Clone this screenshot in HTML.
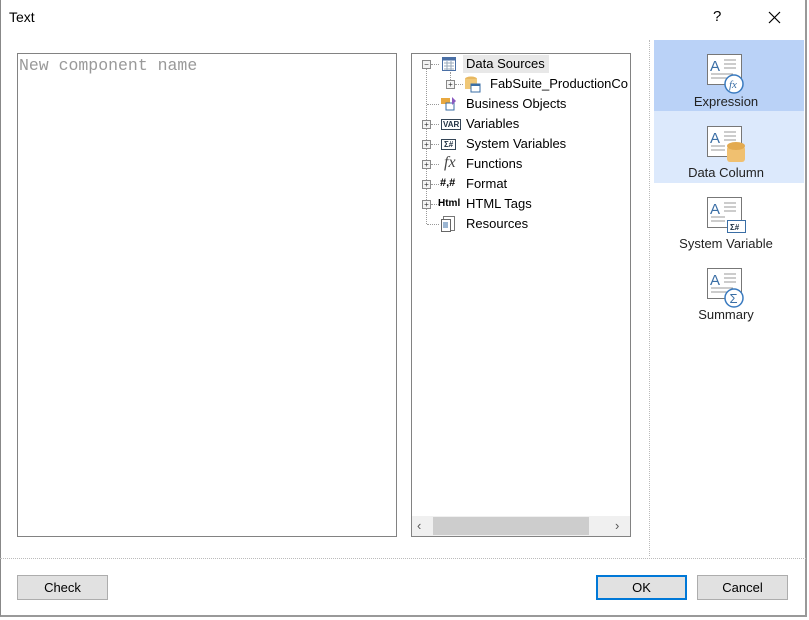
<!DOCTYPE html>
<html><head><style>
body{margin:0;width:809px;height:620px;background:#fff;font-family:"Liberation Sans",sans-serif;font-size:13px;position:relative;overflow:hidden;color:#000}
.a{position:absolute}
.win{left:0;top:0;width:807px;height:617px;border:1px solid #888;border-right:2px solid #999;border-bottom:2px solid #999;border-top:none;box-sizing:border-box}
.tree div{position:absolute;left:54px;height:18px;line-height:18px;font-size:13px;white-space:nowrap}
.pl{position:absolute;width:7px;height:7px;border:1px solid #888;background:#f4f4f4;font-size:8px;line-height:7px;text-align:center;color:#333}
.btn{position:absolute;top:575px;height:25px;background:#e1e1e1;border:1px solid #adadad;box-sizing:border-box;text-align:center;line-height:23px;font-size:13px}
.lbl{position:absolute;width:150px;text-align:center;font-size:13px;color:#222}
.h{position:absolute;width:8px;border-top:1px dotted #999}
</style></head><body>
<div class="a win"></div>
<div class="a" style="left:9px;top:9px;font-size:14px">Text</div>
<div class="a" style="left:713px;top:8px;font-size:15px">?</div>
<svg class="a" style="left:768px;top:11px" width="13" height="13"><path d="M1 1L12 12M12 1L1 12" stroke="#000" stroke-width="1.2"/></svg>
<div class="a" style="left:17px;top:53px;width:380px;height:484px;border:1px solid #828282;box-sizing:border-box"></div>
<div class="a" style="left:19px;top:56px;font-family:'Liberation Mono',monospace;font-size:16.5px;color:#999">New component name</div>
<div class="a" style="left:411px;top:53px;width:220px;height:484px;border:1px solid #828282;box-sizing:border-box"></div>
<div class="a" style="left:412px;top:516px;width:218px;height:20px;background:#f0f0f0"></div>
<div class="a" style="left:433px;top:517px;width:156px;height:18px;background:#cdcdcd"></div>
<div class="a" style="left:417px;top:516px;line-height:20px;color:#555;font-size:13px">‹</div>
<div class="a" style="left:615px;top:516px;line-height:20px;color:#555;font-size:13px">›</div>
<div class="a" style="left:426px;top:68px;height:156px;border-left:1px dotted #999"></div>
<div class="a" style="left:450px;top:72px;height:8px;border-left:1px dotted #999"></div>
<div class="h" style="left:431px;top:64px"></div>
<div class="h" style="left:455px;top:84px"></div>
<div class="h" style="left:427px;top:104px;width:12px"></div>
<div class="h" style="left:431px;top:124px"></div>
<div class="h" style="left:431px;top:144px"></div>
<div class="h" style="left:431px;top:164px"></div>
<div class="h" style="left:431px;top:184px"></div>
<div class="h" style="left:431px;top:204px"></div>
<div class="h" style="left:427px;top:224px;width:12px"></div>
<div class="a" style="left:463px;top:55px;width:86px;height:18px;background:#e8e8e8"></div>
<div class="tree a" style="left:412px;top:0">
<div style="top:55px">Data Sources</div>
<div style="top:75px;left:78px">FabSuite_ProductionCo</div>
<div style="top:95px">Business Objects</div>
<div style="top:115px">Variables</div>
<div style="top:135px">System Variables</div>
<div style="top:155px">Functions</div>
<div style="top:175px">Format</div>
<div style="top:195px">HTML Tags</div>
<div style="top:215px">Resources</div>
</div>
<div class="pl" style="left:422px;top:60px">−</div>
<div class="pl" style="left:446px;top:80px">+</div>
<div class="pl" style="left:422px;top:120px">+</div>
<div class="pl" style="left:422px;top:140px">+</div>
<div class="pl" style="left:422px;top:160px">+</div>
<div class="pl" style="left:422px;top:180px">+</div>
<div class="pl" style="left:422px;top:200px">+</div>
<svg class="a" style="left:441px;top:56px" width="16" height="16"><rect x="1.5" y="1.5" width="13" height="13" fill="#fff" stroke="#4a6fa5"/><rect x="1.5" y="1.5" width="13" height="3" fill="#4a6fa5"/><path d="M3 7h10M3 10h10M3 13h10M6 5v9M10 5v9" stroke="#9ab" stroke-width="1"/></svg>
<svg class="a" style="left:463px;top:75px" width="18" height="18"><ellipse cx="8" cy="4" rx="6" ry="2.5" fill="#e8b860"/><rect x="2" y="4" width="12" height="10" fill="#f0c878"/><rect x="8" y="9" width="9" height="8" fill="#fff" stroke="#3a6ea5"/><rect x="8" y="9" width="9" height="2" fill="#3a6ea5"/></svg>
<svg class="a" style="left:440px;top:95px" width="18" height="18"><rect x="1" y="3" width="9" height="6" fill="#e8a840"/><rect x="6" y="8" width="8" height="7" fill="#fff" stroke="#3a6ea5"/><path d="M12 2l4 4-4 4z" fill="#8a5ac0"/></svg>
<div class="a" style="left:441px;top:119px;font-size:8px;font-weight:bold;border:1px solid #345;padding:0 1px;line-height:9px;color:#234">VAR</div>
<div class="a" style="left:441px;top:139px;font-size:8px;font-weight:bold;border:1px solid #345;padding:0 2px;line-height:9px;color:#234">Σ#</div>
<div class="a" style="left:444px;top:154px;font-family:'Liberation Serif',serif;font-style:italic;font-size:16px;color:#444">fx</div>
<div class="a" style="left:440px;top:177px;font-size:11px;font-weight:bold">#,#</div>
<div class="a" style="left:438px;top:198px;font-size:10px;font-weight:bold">Html</div>
<svg class="a" style="left:440px;top:215px" width="16" height="18"><rect x="3.5" y="1.5" width="11" height="14" fill="#fff" stroke="#777"/><rect x="1.5" y="4.5" width="9" height="12" fill="#fff" stroke="#666"/><path d="M3 8h5M3 10h5M3 12h5" stroke="#3a6ea5"/></svg>
<div class="a" style="left:649px;top:40px;height:516px;border-left:1px dotted #bbb"></div>
<div class="a" style="left:0;top:558px;width:806px;border-top:1px dotted #bbb"></div>
<div class="a" style="left:654px;top:40px;width:150px;height:71px;background:#bad2f7"></div>
<div class="a" style="left:654px;top:111px;width:150px;height:72px;background:#dce9fc"></div>
<svg class="a" style="left:706px;top:53px" width="42" height="42"><rect x="1.5" y="1.5" width="34" height="30" fill="#fff" stroke="#777"/><text x="4" y="18" font-size="15" font-family="Liberation Sans" fill="#3a6ea5">A</text><path d="M18 7h12M18 11h12M18 15h12M5 21h22M5 25h18" stroke="#999"/><circle cx="28" cy="31" r="9" fill="#fff" stroke="#3a7bc0" stroke-width="1.5"/><text x="23" y="35" font-size="11" font-style="italic" font-family="Liberation Serif" fill="#3a6ea5">fx</text></svg>
<svg class="a" style="left:706px;top:125px" width="42" height="42"><rect x="1.5" y="1.5" width="34" height="30" fill="#fff" stroke="#777"/><text x="4" y="18" font-size="15" font-family="Liberation Sans" fill="#3a6ea5">A</text><path d="M18 7h12M18 11h12M18 15h12M5 21h14M5 25h14" stroke="#999"/><rect x="21" y="21" width="18" height="16" rx="3" fill="#f0c070"/><ellipse cx="30" cy="21" rx="9" ry="4" fill="#e3aa50"/></svg>
<svg class="a" style="left:706px;top:196px" width="42" height="42"><rect x="1.5" y="1.5" width="34" height="30" fill="#fff" stroke="#777"/><text x="4" y="18" font-size="15" font-family="Liberation Sans" fill="#3a6ea5">A</text><path d="M18 7h12M18 11h12M18 15h12M5 21h14M5 25h14" stroke="#999"/><rect x="21.5" y="24.5" width="18" height="12" fill="#fff" stroke="#3a6ea5"/><text x="24" y="34" font-size="8" font-weight="bold" font-family="Liberation Sans" fill="#234">Σ#</text></svg>
<svg class="a" style="left:706px;top:267px" width="42" height="42"><rect x="1.5" y="1.5" width="34" height="30" fill="#fff" stroke="#777"/><text x="4" y="18" font-size="15" font-family="Liberation Sans" fill="#3a6ea5">A</text><path d="M18 7h12M18 11h12M18 15h12M5 21h22M5 25h18" stroke="#999"/><circle cx="28" cy="31" r="9" fill="#fff" stroke="#3a7bc0" stroke-width="1.5"/><text x="23.5" y="36" font-size="13" font-family="Liberation Sans" fill="#3a6ea5">Σ</text></svg>
<div class="lbl" style="left:651px;top:94px">Expression</div>
<div class="lbl" style="left:651px;top:165px">Data Column</div>
<div class="lbl" style="left:651px;top:236px">System Variable</div>
<div class="lbl" style="left:651px;top:307px">Summary</div>
<div class="btn" style="left:17px;width:91px">Check</div>
<div class="btn" style="left:596px;width:91px;border:2px solid #0078d7;line-height:21px">OK</div>
<div class="btn" style="left:697px;width:91px">Cancel</div>
</body></html>
